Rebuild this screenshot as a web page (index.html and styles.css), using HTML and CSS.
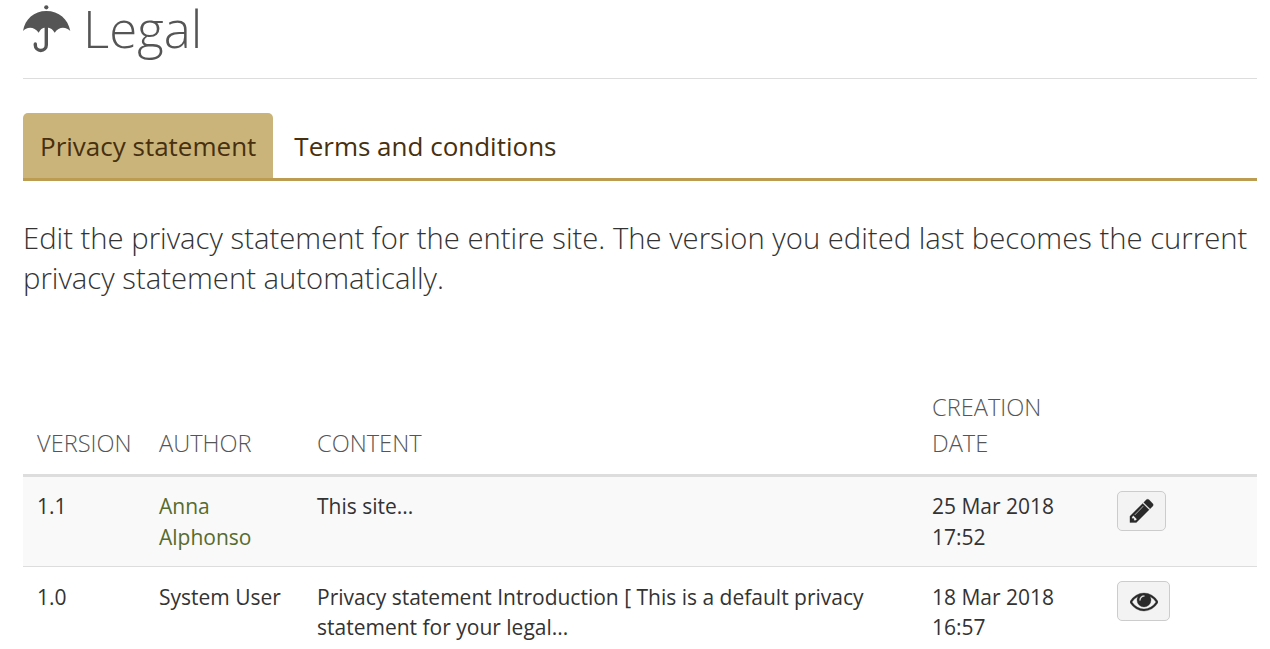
FILE: index.html
```html
<!DOCTYPE html>
<html lang="en">
<head>
    <meta charset="UTF-8">
    <title>Legal</title>
    <link rel="stylesheet" href="styles.css">
</head>
<body>
    <h1 class="page-title">
        <svg class="title-icon" viewBox="0 0 48 48" width="48" height="48">
            <circle cx="23.300" cy="2.300" r="2.100"/>
            <path d="M23.300 6C11 6 2 14 0 26c3-4 11-5.500 15.700 1.700 2.300-4.700 4.800-5 7.600-5s5.700.3 8.400 5C36 20.500 44 22 47.300 26 45 14 36 6 23.300 6z"/>
            <path class="handle" d="M23.300 22V40a5.500 5.500 0 0 1-11 0V39"/>
        </svg>
        Legal
    </h1>

    <ul class="tabs">
        <li class="tab active">Privacy statement</li>
        <li class="tab">Terms and conditions</li>
    </ul>

    <p class="intro">Edit the privacy statement for the entire site. The version you edited last becomes the current privacy statement automatically.</p>

    <table class="versions">
        <thead>
            <tr>
                <th class="col-version">Version</th>
                <th class="col-author">Author</th>
                <th class="col-content">Content</th>
                <th class="col-date">Creation date</th>
                <th></th>
            </tr>
        </thead>
        <tbody>
            <tr class="odd">
                <td>1.1</td>
                <td><a href="#">Anna Alphonso</a></td>
                <td>This site...</td>
                <td>25 Mar 2018 17:52</td>
                <td class="actions">
                    <a class="btn btn-edit" href="#">
                        <svg viewBox="0 0 1792 1792" width="27.500" height="27.500"><path d="M491 1536l91-91-235-235-91 91v107h128v128h107zm523-928q0-22-22-22-10 0-17 7l-542 542q-7 7-7 17 0 22 22 22 10 0 17-7l542-542q7-7 7-17zm-54-192l416 416-832 832h-416v-416zm683 96q0 53-37 90l-166 166-416-416 166-165q36-38 90-38 53 0 91 38l235 234q37 39 37 91z"/></svg>
                    </a>
                </td>
            </tr>
            <tr>
                <td>1.0</td>
                <td>System User</td>
                <td>Privacy statement Introduction [ This is a default privacy statement for your legal...</td>
                <td>18 Mar 2018 16:57</td>
                <td class="actions">
                    <a class="btn btn-view" href="#">
                        <svg viewBox="0 0 1792 1792" width="28" height="28"><path d="M1664 960q-152-236-381-353 61 104 61 225 0 185-131.500 316.500t-316.500 131.500-316.500-131.500-131.500-316.500q0-121 61-225-229 117-381 353 133 205 333.500 326.500t434.500 121.500 434.500-121.500 333.500-326.500zm-720-384q0-20-14-34t-34-14q-125 0-214.500 89.500t-89.500 214.500q0 20 14 34t34 14 34-14 14-34q0-86 61-147t147-61q20 0 34-14t14-34zm848 384q0 34-20 69-140 230-376.500 368.500t-499.500 138.500-499.500-139-376.500-368q-20-35-20-69t20-69q140-229 376.500-368t499.500-139 499.500 139 376.500 368q20 35 20 69z"/></svg>
                    </a>
                </td>
            </tr>
        </tbody>
    </table>
</body>
</html>
```

FILE: styles.css
```css
body {
    font-family: "Open Sans", sans-serif;
    font-size: 21px;
    line-height: 30.450px;
    color: #333;
    margin: 0;
    padding: 0 13px 0 23px;
    overflow: hidden;
    height: 649px;
    box-sizing: border-box;
}
.page-title {
    display: flex;
    align-items: center;
    gap: 12px;
    height: 79px;
    margin: 0;
    padding-bottom: 21px;
    box-sizing: border-box;
    border-bottom: 1px solid #ddd;
    font-size: 51px;
    font-weight: 300;
    line-height: 55px;
    color: #555;
}
.title-icon {
    fill: #555;
    flex: none;
}
.title-icon .handle {
    fill: none;
    stroke: #555;
    stroke-width: 3.400;
    stroke-linecap: round;
}
.tabs {
    display: flex;
    list-style: none;
    margin: 34px 0 0;
    padding: 0;
    border-bottom: 3px solid #bc9c50;
}
.tab {
    padding: 0 17px;
    height: 65px;
    line-height: 67px;
    font-size: 26px;
    color: #46300f;
}
.tab.active {
    background-color: #cab47a;
    border-radius: 5px 5px 0 0;
}
.tab + .tab {
    padding-left: 21px;
}
.intro {
    margin: 37px 0 0;
    font-size: 29.250px;
    font-weight: 300;
    line-height: 40px;
    color: #333;
}
.versions {
    width: 100%;
    table-layout: fixed;
    border-collapse: collapse;
    margin-top: 91px;
}
.versions th {
    padding: 0 14px 13px;
    text-align: left;
    vertical-align: bottom;
    font-size: 23.625px;
    font-weight: 300;
    line-height: 36px;
    text-transform: uppercase;
    color: #555;
    border-bottom: 3px solid #ddd;
}
.col-version { width: 94px; }
.col-author { width: 130px; }
.col-content { width: 587px; }
.col-date { width: 157px; }
.versions td {
    padding: 14.250px 14px 13.750px;
    vertical-align: top;
    border-bottom: 1px solid #ddd;
}
.versions tr + tr td {
    padding-top: 14.600px;
    padding-bottom: 13.400px;
}
.versions .actions,
.versions tr + tr .actions {
    padding-top: 14px;
}
.versions .odd {
    background-color: #f9f9f9;
}
.versions a {
    color: #566b2d;
    text-decoration: none;
}
.versions .btn {
    display: inline-flex;
    align-items: center;
    justify-content: center;
    height: 40px;
    box-sizing: border-box;
    background-color: #f3f3f3;
    border: 1px solid #ccc;
    border-radius: 5px;
    vertical-align: top;
}
.versions .btn svg {
    fill: #2a2a2a;
    stroke: #2a2a2a;
    stroke-width: 20;
}
.btn-edit { width: 49px; }
.btn-view { width: 53px; }
```
